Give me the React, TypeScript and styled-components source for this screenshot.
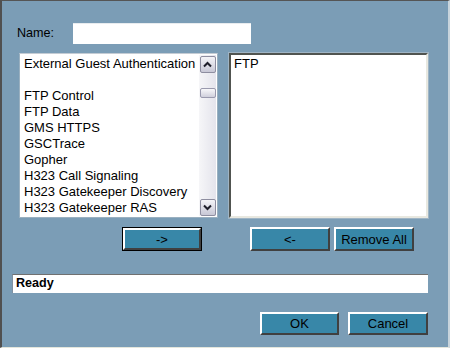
import React from "react";
import styled, { createGlobalStyle } from "styled-components";

const Global = createGlobalStyle`
  html, body { margin: 0; padding: 0; background: #7b9db6; }
  body { font-family: "Liberation Sans", Arial, sans-serif; }
`;

const Frame = styled.div`
  box-sizing: border-box;
  width: 450px;
  height: 348px;
  background: #7b9db6;
  border-top: 1px solid #555;
  border-left: 2px solid #505050;
  border-right: 2px solid #c8d4dc;
  border-bottom: 1px solid #e4e6dc;
  display: flex;
  flex-direction: column;
  padding: 22px 20px 0 10px;
  color: #000;
  font-size: 13px;
`;

const NameRow = styled.div`
  display: flex;
  align-items: center;
  height: 20px;
  padding-left: 5px;
`;

const Label = styled.span`
  width: 56px;
  font-size: 12.6px;
`;

const TextInput = styled.div`
  width: 178px;
  height: 20px;
  background: #fff;
  border-top: 1px solid #e8ecef;
`;

const ListsRow = styled.div`
  display: flex;
  margin-top: 10px;
  padding-left: 7px;
  gap: 11px;
  height: 165px;
`;

const LeftList = styled.div`
  box-sizing: border-box;
  width: 199px;
  height: 165px;
  background: #fff;
  border: 1px solid #9ab0c0;
  border-top-color: #c4ccd4;
  display: flex;
  padding: 1px;
`;

const Items = styled.div`
  flex: 1;
  padding: 1px 0 0 3px;
  overflow: hidden;
`;

const Item = styled.div`
  height: 16px;
  line-height: 16px;
  font-size: 13px;
  white-space: nowrap;
`;

const Scrollbar = styled.div`
  width: 17px;
  display: flex;
  flex-direction: column;
  align-items: center;
  background: linear-gradient(to right, #f6f6f8, #e4e4ec);
  padding-top: 1px;
`;

const ScrollButton = styled.div`
  box-sizing: border-box;
  width: 16px;
  height: 17px;
  border: 1px solid #8e8ea0;
  border-radius: 2px;
  background: linear-gradient(to bottom, #f4f4f8, #c8c8d6);
  display: flex;
  align-items: center;
  justify-content: center;
`;

const Thumb = styled.div`
  box-sizing: border-box;
  width: 16px;
  height: 10px;
  margin-top: 15px;
  border: 1px solid #9a9aae;
  border-radius: 2px;
  background: linear-gradient(to bottom, #f8f8fa, #d0d0dc);
`;

const Spacer = styled.div`
  flex: 1;
`;

const RightList = styled.div`
  box-sizing: border-box;
  width: 199px;
  height: 165px;
  background: #fff;
  border: 2px solid;
  border-color: #505450 #e8e8e0 #e8e8e0 #505450;
  box-shadow: 0 0 0 1px #9fb4c4;
  padding: 1px 0 0 3px;
`;

const ButtonsRow = styled.div`
  display: flex;
  margin-top: 9px;
  height: 24px;
  padding-left: 110px;
`;

const Btn = styled.button<{ $w?: number; $h?: number }>`
  box-sizing: border-box;
  width: ${(p) => p.$w ?? 80}px;
  height: ${(p) => p.$h ?? 24}px;
  margin: 0;
  padding: 0;
  background: #3887a8;
  font-family: "Liberation Sans", Arial, sans-serif;
  font-size: 13px;
  color: #000;
  border: 2px solid;
  border-color: #ffffff #404040 #404040 #ffffff;
  display: flex;
  align-items: center;
  justify-content: center;
`;

const FocusWrap = styled.div`
  border: 1px solid #000;
  display: flex;
`;

const GapL = styled.div<{ $w: number }>`
  width: ${(p) => p.$w}px;
`;

const Status = styled.div`
  box-sizing: border-box;
  margin-top: 23px;
  width: 416px;
  height: 19px;
  background: #fff;
  border-top: 1px solid #707070;
  border-left: 1px solid #8090a0;
  font-weight: bold;
  font-size: 12.6px;
  line-height: 17px;
  padding-left: 3px;
`;

const BottomRow = styled.div`
  display: flex;
  justify-content: flex-end;
  margin-top: 19px;
  height: 23px;
  gap: 9px;
`;

const Chevron = ({ up }: { up?: boolean }) => (
  <svg width="9" height="7" viewBox="0 0 9 7">
    <path
      d={up ? "M1 5.5 L4.5 2 L8 5.5" : "M1 1.5 L4.5 5 L8 1.5"}
      fill="none"
      stroke="#1e1e2a"
      strokeWidth="2"
    />
  </svg>
);

const leftItems = [
  "External Guest Authentication",
  "",
  "FTP Control",
  "FTP Data",
  "GMS HTTPS",
  "GSCTrace",
  "Gopher",
  "H323 Call Signaling",
  "H323 Gatekeeper Discovery",
  "H323 Gatekeeper RAS",
];

export default function App() {
  return (
    <>
      <Global />
      <Frame>
        <NameRow>
          <Label>Name:</Label>
          <TextInput />
        </NameRow>
        <ListsRow>
          <LeftList>
            <Items>
              {leftItems.map((t, i) => (
                <Item key={i}>{t || "\u00a0"}</Item>
              ))}
            </Items>
            <Scrollbar>
              <ScrollButton>
                <Chevron up />
              </ScrollButton>
              <Thumb />
              <Spacer />
              <ScrollButton>
                <Chevron />
              </ScrollButton>
            </Scrollbar>
          </LeftList>
          <RightList>
            <Item>FTP</Item>
          </RightList>
        </ListsRow>
        <ButtonsRow>
          <FocusWrap>
            <Btn $w={78} $h={22}>-&gt;</Btn>
          </FocusWrap>
          <GapL $w={48} />
          <Btn $w={80}>&lt;-</Btn>
          <GapL $w={4} />
          <Btn $w={80}>Remove All</Btn>
        </ButtonsRow>
        <Status>Ready</Status>
        <BottomRow>
          <Btn $w={79} $h={23}>OK</Btn>
          <Btn $w={80} $h={23}>Cancel</Btn>
        </BottomRow>
      </Frame>
    </>
  );
}
